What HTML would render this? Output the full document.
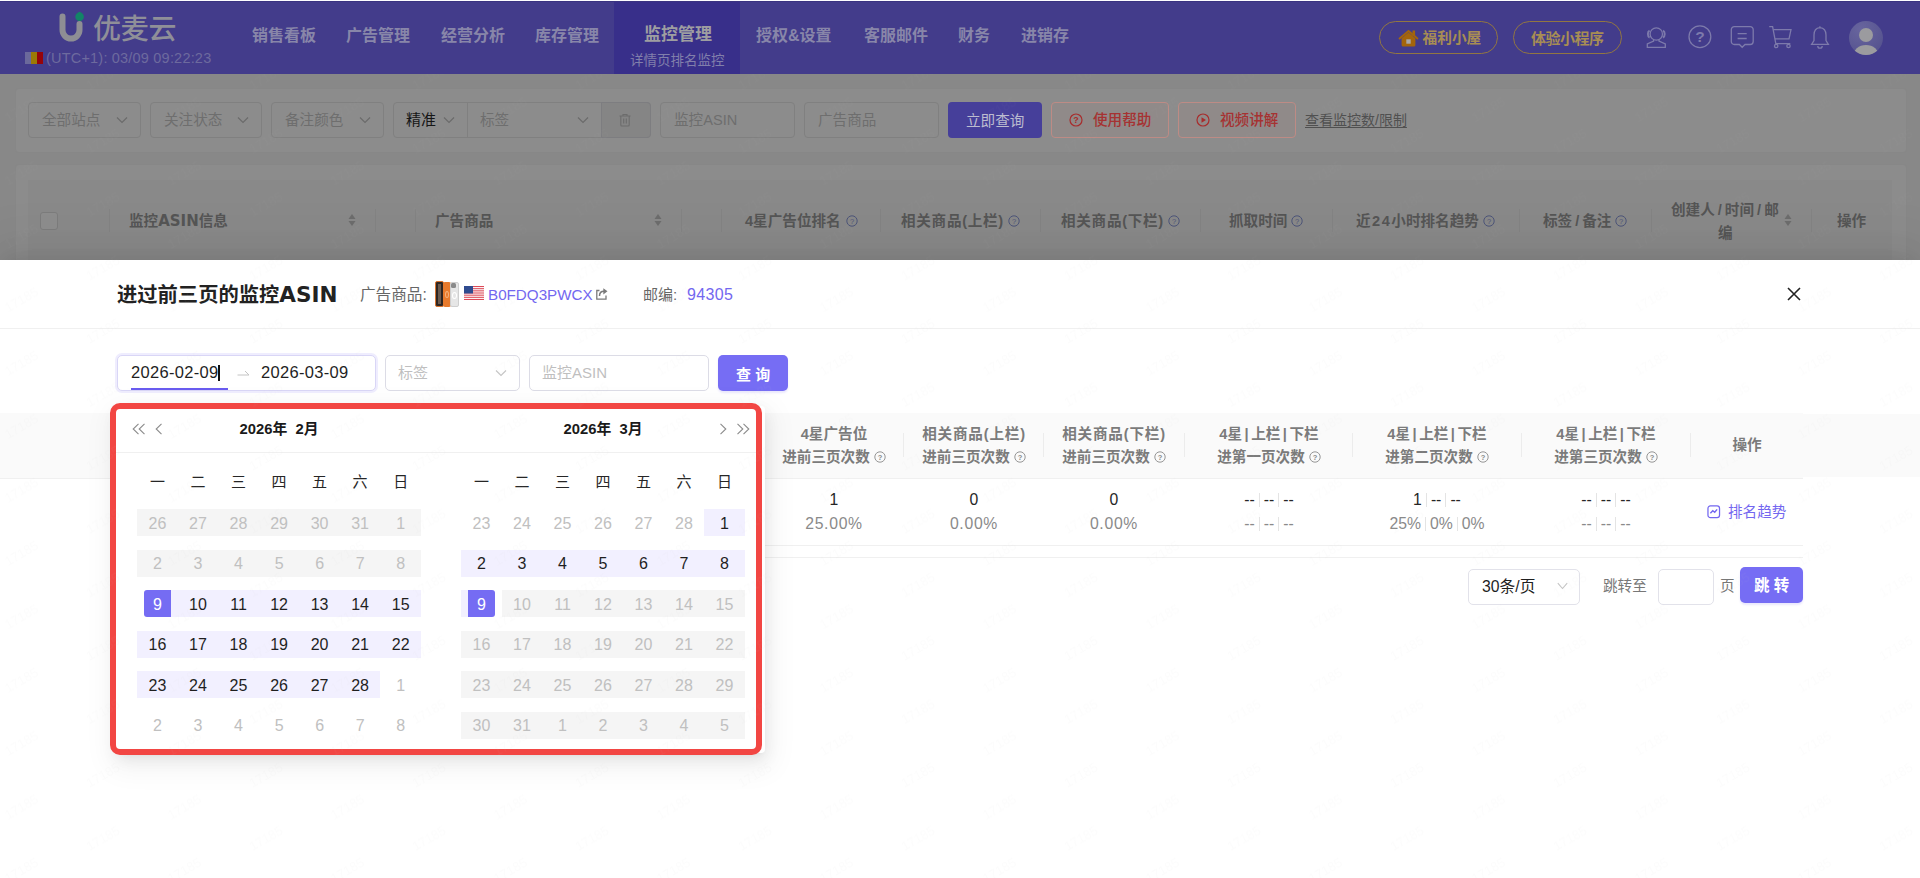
<!DOCTYPE html>
<html lang="zh-CN">
<head>
<meta charset="utf-8">
<title>优麦云 - 详情页排名监控</title>
<style>
*{box-sizing:border-box;margin:0;padding:0}
html,body{width:1920px;height:878px;overflow:hidden;background:#888888}
body{font-family:"Liberation Sans","Noto Sans CJK SC",sans-serif;font-size:14px;color:#333;position:relative}
.abs{position:absolute}
.pp{font-style:normal;margin:0 2.5px}
.sl{font-style:normal;margin:0 3px}
.t{position:absolute;white-space:nowrap;line-height:1}
/* ===== dimmed page ===== */
#hdr{position:absolute;left:0;top:0;width:1920px;height:74px;background:#433c8b}
#hdr .act{position:absolute;left:614px;top:0;width:126px;height:74px;background:#382f8a}
.nav{position:absolute;top:28px;font-size:16px;font-weight:bold;color:#8886a9;white-space:nowrap;line-height:16px}
.card{position:absolute;background:#8c8c8c;border-radius:4px}
.sel{position:absolute;top:102px;height:36px;border:1px solid #808080;border-radius:4px;background:#8c8c8c}
.sel span{position:absolute;left:13px;top:9px;font-size:14.6px;line-height:16px;color:#6e6e6e;white-space:nowrap}
.chev{position:absolute;width:12px;height:8px}
.th1{position:absolute;font-size:14.6px;font-weight:bold;color:#555;white-space:nowrap;line-height:16px}
/* ===== drawer ===== */
#drawer{position:absolute;left:0;top:260px;width:1920px;height:618px;background:#fff;box-shadow:0 -6px 16px -8px rgba(0,0,0,.08),0 -9px 28px rgba(0,0,0,.05),0 -12px 48px 16px rgba(0,0,0,.03)}
</style>
</head>
<body>
<div id="hdr">
<div class="abs" style="left:0;top:0;width:1920px;height:1px;background:#fdfdff;z-index:3"></div><div class="abs" style="left:0;top:1px;width:1920px;height:1px;background:#3a3381;z-index:3"></div>
<div class="act"></div>
<svg class="abs" style="left:56px;top:10px" width="32" height="36" viewBox="0 0 32 36">
<path d="M6.5 6.5 V20 a8.5 8.5 0 0 0 17 0 V14" fill="none" stroke="#8e8e94" stroke-width="6" stroke-linecap="round"/>
<circle cx="23.600" cy="6.700" r="4.300" fill="#138467"/><path d="M20.800 3.600 L23.600 1.700 L26.400 3.600 Z" fill="#138467"/>
</svg>
<div class="t" style="left:93px;top:15px;font-size:28px;line-height:30px;color:#8f8f98;font-weight:500;letter-spacing:-0.3px">优麦云</div>
<div class="abs" style="left:25px;top:52px;width:6px;height:12px;background:#6b699b"></div>
<div class="abs" style="left:31px;top:52px;width:6px;height:12px;background:#9b7a05"></div>
<div class="abs" style="left:37px;top:52px;width:6px;height:12px;background:#96040a"></div>
<div class="t" id="utc" style="left:46px;top:50px;font-size:14.5px;line-height:16px;color:#6d6a9e;letter-spacing:0.2px">(UTC+1): 03/09 09:22:23</div>
<div class="nav" style="left:252px">销售看板</div>
<div class="nav" style="left:346px">广告管理</div>
<div class="nav" style="left:441px">经营分析</div>
<div class="nav" style="left:535px">库存管理</div>
<div class="nav" style="left:644px;font-size:17px;color:#9e9ea1;top:27px">监控管理</div>
<div class="t" style="left:630px;top:53px;font-size:13.5px;line-height:15px;color:#817fab">详情页排名监控</div>
<div class="nav" style="left:756px">授权&amp;设置</div>
<div class="nav" style="left:864px">客服邮件</div>
<div class="nav" style="left:958px">财务</div>
<div class="nav" style="left:1021px">进销存</div>
<div class="abs" style="left:1379px;top:21px;width:119px;height:33px;border:1px solid #927641;border-radius:17px"></div>
<svg class="abs" style="left:1397.500px;top:28.500px" width="21" height="18" viewBox="0 0 21 18"><rect x="14.500" y="1.500" width="2.600" height="5.500" fill="#a4650b"/><path d="M10.500 0.800 L20.600 9.300 L19.400 10.700 L10.500 3.300 L1.600 10.700 L0.400 9.300 Z" fill="#a4650b"/><path d="M3.600 9.200 L10.500 3.400 L17.400 9.200 V16 a1.500 1.500 0 0 1 -1.500 1.500 H5.100 a1.500 1.500 0 0 1 -1.500 -1.500 Z" fill="#a4650b"/><rect x="8.300" y="10.300" width="4.400" height="4.400" fill="#aaa7a6"/></svg>
<div class="t" style="left:1422.500px;top:29.500px;font-size:14.700px;line-height:17px;font-weight:bold;color:#a78d54">福利小屋</div>
<div class="abs" style="left:1513px;top:21px;width:109px;height:33px;border:1px solid #927641;border-radius:17px"></div>
<div class="t" style="left:1531px;top:30px;font-size:15px;line-height:17px;font-weight:bold;color:#a78d54;letter-spacing:-0.5px">体验小程序</div>
<!-- icons -->
<svg class="abs" style="left:1645px;top:25px" width="24" height="24" viewBox="0 0 24 24" fill="none" stroke="#7d7aab" stroke-width="1.300"><circle cx="11.300" cy="9" r="6.200"/><path d="M4.600 5.600 C2.300 6.600 2.300 11.600 4.600 12.600 M18 5.600 C20.300 6.600 20.300 11.600 18 12.600" stroke-width="1.900"/><path d="M8.600 14.600 V16 L2.300 19 V22.300 H20.300 V19 L14 16 V14.600"/></svg>
<svg class="abs" style="left:1688px;top:25px" width="24" height="24" viewBox="0 0 24 24" fill="none" stroke="#7d7aab" stroke-width="1.300"><circle cx="11.900" cy="11.700" r="10.900"/><text x="11.900" y="17.300" font-size="15.500" font-weight="bold" text-anchor="middle" fill="#7d7aab" stroke="none" font-family="Liberation Sans,sans-serif">?</text></svg>
<svg class="abs" style="left:1730px;top:25px" width="24" height="24" viewBox="0 0 24 24" fill="none" stroke="#7d7aab" stroke-width="1.300"><path d="M4.300 1.700 H20.200 a3 3 0 0 1 3 3 V16.500 a3 3 0 0 1 -3 3 H15 L12.200 22.300 L9.400 19.500 H4.300 a3 3 0 0 1 -3 -3 V4.700 a3 3 0 0 1 3 -3 z"/><path d="M7.600 8.600 H16.700 M7.600 13.500 H16.700"/></svg>
<svg class="abs" style="left:1768px;top:25px" width="24" height="24" viewBox="0 0 24 24" fill="none" stroke="#7d7aab" stroke-width="1.300"><path d="M1.200 1.600 H4.600 L7.800 18.700 H22.300"/><path d="M5.300 4.700 H23 L21 13.800 H7" /><circle cx="8.200" cy="21" r="1.700"/><circle cx="20.500" cy="21" r="1.700"/></svg>
<svg class="abs" style="left:1809px;top:25px" width="24" height="24" viewBox="0 0 24 24" fill="none" stroke="#7d7aab" stroke-width="1.300"><path d="M10.900 2.600 C6.500 3 5 6.500 5 10 V15.500 L2.600 19.400 H19.400 L17 15.500 V10 C17 6.500 15.300 3 10.900 2.600 Z"/><path d="M8.800 21 a2.200 2.200 0 0 0 4.400 0 M10.900 1.200 v1.400"/></svg>
<div class="abs" style="left:1849px;top:21px;width:34px;height:34px;border-radius:50%;background:radial-gradient(circle at 35% 25%,#68659e,#575490 75%);overflow:hidden"><div class="abs" style="left:10px;top:7px;width:14px;height:14px;border-radius:50%;background:#9b9b9f"></div><div class="abs" style="left:4px;top:23.500px;width:26px;height:22px;border-radius:50%;background:#9b9b9f"></div></div>
</div>
<div class="card" style="left:15px;top:88px;width:1892px;height:65px;border:1px solid #878787"></div>
<div class="sel" style="left:28px;width:113px"><span>全部站点</span></div><svg class="abs" style="left:116px;top:116px" width="12" height="8" viewBox="0 0 12 8"><path d="M1 1.500 L6 6.500 L11 1.500" fill="none" stroke="#6a6a6a" stroke-width="1.100"/></svg>
<div class="sel" style="left:150px;width:112px"><span>关注状态</span></div><svg class="abs" style="left:237px;top:116px" width="12" height="8" viewBox="0 0 12 8"><path d="M1 1.500 L6 6.500 L11 1.500" fill="none" stroke="#6a6a6a" stroke-width="1.100"/></svg>
<div class="sel" style="left:271px;width:113px"><span>备注颜色</span></div><svg class="abs" style="left:359px;top:116px" width="12" height="8" viewBox="0 0 12 8"><path d="M1 1.500 L6 6.500 L11 1.500" fill="none" stroke="#6a6a6a" stroke-width="1.100"/></svg>
<div class="sel" style="left:393px;width:258px"><span style="color:#161616;font-size:15px;left:12px">精准</span>
<div class="abs" style="left:73px;top:0;width:1px;height:34px;background:#808080"></div>
<span style="left:86px">标签</span>
<div class="abs" style="left:207px;top:-1px;width:50px;height:36px;background:#858585;border:1px solid #7d7d80;border-radius:0 4px 4px 0"></div>
</div><svg class="abs" style="left:443px;top:116px" width="12" height="8" viewBox="0 0 12 8"><path d="M1 1.500 L6 6.500 L11 1.500" fill="none" stroke="#6a6a6a" stroke-width="1.100"/></svg><svg class="abs" style="left:577px;top:116px" width="12" height="8" viewBox="0 0 12 8"><path d="M1 1.500 L6 6.500 L11 1.500" fill="none" stroke="#6a6a6a" stroke-width="1.100"/></svg>
<svg class="abs" style="left:619px;top:113px" width="12" height="14" viewBox="0 0 12 14" fill="none" stroke="#6c6c6c" stroke-width="1.100"><path d="M0.500 3 h11 M4 3 v-1.500 h4 v1.500 M1.800 3 v9 a1 1 0 0 0 1 1 h6.400 a1 1 0 0 0 1 -1 v-9 M4.700 5.500 v5 M7.300 5.500 v5"/></svg>
<div class="sel" style="left:660px;width:135px"><span>监控ASIN</span></div>
<div class="sel" style="left:804px;width:135px"><span>广告商品</span></div>
<div class="abs" style="left:948px;top:102px;width:94px;height:36px;background:#463f9a;border-radius:4px"></div>
<div class="t" style="left:966px;top:113px;font-size:14.6px;line-height:17px;color:#bcbcd0">立即查询</div>
<div class="abs" style="left:1051px;top:102px;width:118px;height:36px;border:1px solid #bd8b85;border-radius:4px;background:#908a89"></div>
<svg class="abs" style="left:1069px;top:113px" width="14" height="14" viewBox="0 0 14 14"><circle cx="7" cy="7" r="6" fill="none" stroke="#a82c2c" stroke-width="1.200"/><text x="7" y="10.300" font-size="9" font-weight="bold" text-anchor="middle" fill="#a82c2c" font-family="Liberation Sans,sans-serif">?</text></svg>
<div class="t" style="left:1093px;top:112px;font-size:14.6px;line-height:17px;color:#a63232;font-weight:500">使用帮助</div>
<div class="abs" style="left:1178px;top:102px;width:118px;height:36px;border:1px solid #bd8b85;border-radius:4px;background:#908a89"></div>
<svg class="abs" style="left:1196px;top:113px" width="14" height="14" viewBox="0 0 14 14"><circle cx="7" cy="7" r="6" fill="none" stroke="#a82c2c" stroke-width="1.200"/><path d="M5.500 4.300 L10 7 L5.500 9.700 Z" fill="#a82c2c"/></svg>
<div class="t" style="left:1220px;top:112px;font-size:14.6px;line-height:17px;color:#a63232;font-weight:500">视频讲解</div>
<div class="t" style="left:1305px;top:112px;font-size:14px;line-height:16px;color:#505050;text-decoration:underline;text-underline-offset:2px">查看监控数/限制</div>

<div class="card" style="left:15px;top:164px;width:1892px;height:120px;border:1px solid #878787"></div>
<div class="abs" style="left:28px;top:180px;width:1864px;height:90px;background:#898989"></div>
<div class="abs" style="left:40px;top:212px;width:18px;height:18px;border:1px solid #7c7c7c;border-radius:3px;background:#8d8d8d"></div>
<div class="abs" style="left:109px;top:209px;width:1px;height:23px;background:#838383"></div><div class="abs" style="left:375px;top:209px;width:1px;height:23px;background:#838383"></div><div class="abs" style="left:415px;top:209px;width:1px;height:23px;background:#838383"></div><div class="abs" style="left:681px;top:209px;width:1px;height:23px;background:#838383"></div><div class="abs" style="left:721px;top:209px;width:1px;height:23px;background:#838383"></div><div class="abs" style="left:880px;top:209px;width:1px;height:23px;background:#838383"></div><div class="abs" style="left:1040px;top:209px;width:1px;height:23px;background:#838383"></div><div class="abs" style="left:1200px;top:209px;width:1px;height:23px;background:#838383"></div><div class="abs" style="left:1332px;top:209px;width:1px;height:23px;background:#838383"></div><div class="abs" style="left:1519px;top:209px;width:1px;height:23px;background:#838383"></div><div class="abs" style="left:1651px;top:209px;width:1px;height:23px;background:#838383"></div><div class="abs" style="left:1811px;top:209px;width:1px;height:23px;background:#838383"></div>
<div class="th1" style="left:129px;top:213px">监控<span style="font-family:'DejaVu Sans','Liberation Sans',sans-serif;font-size:15px">ASIN</span>信息</div><svg class="abs" style="left:348px;top:213px" width="8" height="14" viewBox="0 0 8 14"><path d="M4 1 L7.500 6 H0.500 Z M4 13 L7.500 8 H0.500 Z" fill="#6c6c6c"/></svg>
<div class="th1" style="left:435px;top:213px">广告商品</div><svg class="abs" style="left:654px;top:213px" width="8" height="14" viewBox="0 0 8 14"><path d="M4 1 L7.500 6 H0.500 Z M4 13 L7.500 8 H0.500 Z" fill="#6c6c6c"/></svg>
<div class="th1" style="left:745px;top:213px">4星广告位排名</div><svg class="abs" style="left:846px;top:215px" width="12" height="12" viewBox="0 0 12 12"><circle cx="6" cy="6" r="5.200" fill="none" stroke="#4c5479" stroke-width="1"/><text x="6" y="8.800" font-size="7.500" text-anchor="middle" fill="#4c5479" font-family="Liberation Sans,sans-serif">?</text></svg>
<div class="th1" style="left:901px;top:213px"><span style="letter-spacing:0.7px">相关商品(上栏)</span></div><svg class="abs" style="left:1008px;top:215px" width="12" height="12" viewBox="0 0 12 12"><circle cx="6" cy="6" r="5.200" fill="none" stroke="#4c5479" stroke-width="1"/><text x="6" y="8.800" font-size="7.500" text-anchor="middle" fill="#4c5479" font-family="Liberation Sans,sans-serif">?</text></svg>
<div class="th1" style="left:1061px;top:213px"><span style="letter-spacing:0.7px">相关商品(下栏)</span></div><svg class="abs" style="left:1168px;top:215px" width="12" height="12" viewBox="0 0 12 12"><circle cx="6" cy="6" r="5.200" fill="none" stroke="#4c5479" stroke-width="1"/><text x="6" y="8.800" font-size="7.500" text-anchor="middle" fill="#4c5479" font-family="Liberation Sans,sans-serif">?</text></svg>
<div class="th1" style="left:1229px;top:213px">抓取时间</div><svg class="abs" style="left:1291px;top:215px" width="12" height="12" viewBox="0 0 12 12"><circle cx="6" cy="6" r="5.200" fill="none" stroke="#4c5479" stroke-width="1"/><text x="6" y="8.800" font-size="7.500" text-anchor="middle" fill="#4c5479" font-family="Liberation Sans,sans-serif">?</text></svg>
<div class="th1" style="left:1356px;top:213px"><span style="letter-spacing:1.5px">近24</span>小时排名趋势</div><svg class="abs" style="left:1483px;top:215px" width="12" height="12" viewBox="0 0 12 12"><circle cx="6" cy="6" r="5.200" fill="none" stroke="#4c5479" stroke-width="1"/><text x="6" y="8.800" font-size="7.500" text-anchor="middle" fill="#4c5479" font-family="Liberation Sans,sans-serif">?</text></svg>
<div class="th1" style="left:1543px;top:213px">标签<i class="sl">/</i>备注</div><svg class="abs" style="left:1615px;top:215px" width="12" height="12" viewBox="0 0 12 12"><circle cx="6" cy="6" r="5.200" fill="none" stroke="#4c5479" stroke-width="1"/><text x="6" y="8.800" font-size="7.500" text-anchor="middle" fill="#4c5479" font-family="Liberation Sans,sans-serif">?</text></svg>
<div class="th1" style="left:1671px;top:202px">创建人<i class="sl">/</i>时间<i class="sl">/</i>邮</div>
<div class="th1" style="left:1718px;top:225px">编</div><svg class="abs" style="left:1784px;top:213px" width="8" height="14" viewBox="0 0 8 14"><path d="M4 1 L7.500 6 H0.500 Z M4 13 L7.500 8 H0.500 Z" fill="#6c6c6c"/></svg>
<div class="th1" style="left:1837px;top:213px">操作</div>

<div id="drawer">
<div class="t" style="left:117px;top:24px;font-size:20.3px;line-height:22px;color:#222;font-weight:bold">进过前三页的监控<span style="font-family:'DejaVu Sans','Liberation Sans',sans-serif;font-size:21.5px">ASIN</span></div>
<div class="t" style="left:360px;top:26px;font-size:15.6px;line-height:17px;color:#666;">广告商品:</div>
<div class="abs" style="left:435px;top:20px;width:24px;height:28px;overflow:hidden;background:#fff"><div class="abs" style="left:0;top:1px;width:9px;height:26px;background:#2e2622;border:1.500px solid #d9742f;border-radius:2px"></div><div class="abs" style="left:3px;top:4px;width:3px;height:20px;background:#6b5a4e"></div><div class="abs" style="left:8px;top:2px;width:8px;height:25px;background:#e87a2c;border-radius:2px"></div><div class="abs" style="left:10px;top:11px;width:4px;height:7px;border:1px solid #f3b27d;border-radius:50%"></div><div class="abs" style="left:15px;top:2px;width:9px;height:25px;background:#e6e6e6;border:1px solid #cfcfcf;border-radius:2px"></div><div class="abs" style="left:16px;top:3px;width:5px;height:5px;background:#8a8a8a;border-radius:1.500px"></div><div class="abs" style="left:17px;top:12px;width:5px;height:7px;border:1px solid #fff;border-radius:50%"></div></div>
<svg class="abs" style="left:464px;top:26px" width="20" height="14" viewBox="0 0 20 14"><rect width="20" height="14" fill="#fff"/><rect x="0" y="0.00" width="20" height="1.08" fill="#dc4a58"/><rect x="0" y="2.15" width="20" height="1.08" fill="#dc4a58"/><rect x="0" y="4.31" width="20" height="1.08" fill="#dc4a58"/><rect x="0" y="6.46" width="20" height="1.08" fill="#dc4a58"/><rect x="0" y="8.62" width="20" height="1.08" fill="#dc4a58"/><rect x="0" y="10.77" width="20" height="1.08" fill="#dc4a58"/><rect x="0" y="12.92" width="20" height="1.08" fill="#dc4a58"/><rect width="9" height="7.500" fill="#2f4b8f"/></svg>
<div class="t" style="left:488px;top:26px;font-size:15.2px;line-height:17px;color:#7367f0;">B0FDQ3PWCX</div>
<svg class="abs" style="left:595px;top:27px" width="14" height="14" viewBox="0 0 14 14" fill="none" stroke="#7a7a7a" stroke-width="1.300"><path d="M4.500 3.500 H1.800 V12.200 H11 V8.500"/><path d="M4.500 9 C4.500 5.800 6.500 4.300 9 4.300" stroke-width="1.500"/><path d="M8.300 1.200 L12.500 4.300 L8.300 7.400 Z" fill="#7a7a7a" stroke="none"/></svg>
<div class="t" style="left:643px;top:26px;font-size:15px;line-height:17px;color:#666;">邮编:</div>
<div class="t" style="left:687px;top:26px;font-size:16px;letter-spacing:0.35px;line-height:18px;color:#7367f0;">94305</div>
<svg class="abs" style="left:1787px;top:27px" width="14" height="14" viewBox="0 0 14 14"><path d="M1 1 L13 13 M13 1 L1 13" stroke="#222" stroke-width="1.600"/></svg>
<div class="abs" style="left:0px;top:68px;width:1920px;height:1px;background:#f0f0f0;"></div>
<div class="abs" style="left:117px;top:95px;width:259px;height:36px;background:#fff;border:1px solid #d9d6f6;border-radius:5px;box-shadow:0 0 0 2px #efedfe"></div>
<div class="t" style="left:131px;top:103px;font-size:16.5px;line-height:18px;color:#1f1f1f;letter-spacing:0.3px">2026-02-09</div>
<div class="abs" style="left:218px;top:105px;width:2px;height:16px;background:#111;"></div>
<svg class="abs" style="left:237px;top:109px" width="13" height="8" viewBox="0 0 13 8"><path d="M0.500 6 H12 L8 2" fill="none" stroke="#c4c4c4" stroke-width="1"/></svg>
<div class="t" style="left:261px;top:103px;font-size:16.5px;line-height:18px;color:#1f1f1f;letter-spacing:0.3px">2026-03-09</div>
<div class="abs" style="left:131px;top:128px;width:97px;height:2px;background:#6a5cf0;"></div>
<div class="abs" style="left:385px;top:95px;width:135px;height:36px;background:#fff;border:1px solid #dcdce6;border-radius:5px"></div>
<div class="t" style="left:398px;top:104px;font-size:15px;line-height:17px;color:#bfbfbf;">标签</div>
<svg class="abs" style="left:495px;top:109px" width="12" height="8" viewBox="0 0 12 8"><path d="M1 1.500 L6 6.500 L11 1.500" fill="none" stroke="#c4c4c4" stroke-width="1.100"/></svg>
<div class="abs" style="left:529px;top:95px;width:180px;height:36px;background:#fff;border:1px solid #dcdce6;border-radius:5px"></div>
<div class="t" style="left:542px;top:104px;font-size:15px;line-height:17px;color:#bfbfbf;">监控ASIN</div>
<div class="abs" style="left:718px;top:95px;width:70px;height:36px;background:#766df4;border-radius:5px;box-shadow:0 2px 2px rgba(115,103,240,.15)"></div>
<div class="t" style="left:736px;top:105.500px;font-size:15px;line-height:17px;color:#fff;font-weight:bold">查 询</div>
<div class="abs" style="left:0px;top:153px;width:1803px;height:65px;background:#fafafa;"></div><div class="abs" style="left:1803px;top:154px;width:117px;height:63px;background:#fafafa;"></div>
<div class="abs" style="left:0px;top:218px;width:1803px;height:1px;background:#f0f0f0;"></div>
<div class="abs" style="left:903px;top:173px;width:1px;height:24px;background:#ececec;"></div>
<div class="abs" style="left:1043px;top:173px;width:1px;height:24px;background:#ececec;"></div>
<div class="abs" style="left:1184px;top:173px;width:1px;height:24px;background:#ececec;"></div>
<div class="abs" style="left:1352px;top:173px;width:1px;height:24px;background:#ececec;"></div>
<div class="abs" style="left:1521px;top:173px;width:1px;height:24px;background:#ececec;"></div>
<div class="abs" style="left:1690px;top:173px;width:1px;height:24px;background:#ececec;"></div>
<div class="t" style="left:684px;width:300px;text-align:center;top:166px;font-size:14.6px;line-height:17px;color:#7b7b7b;font-weight:bold">4星广告位</div>
<div class="t" style="left:684px;width:300px;text-align:center;top:189px;font-size:14.6px;line-height:17px;color:#7b7b7b;font-weight:bold">进前三页次数<svg style="display:inline-block;vertical-align:-1px;margin-left:4px" width="12" height="12" viewBox="0 0 12 12"><circle cx="6" cy="6" r="5.200" fill="none" stroke="#8a8a8a" stroke-width="0.900"/><text x="6" y="8.800" font-size="7.500" text-anchor="middle" fill="#8a8a8a" font-family="Liberation Sans,sans-serif">?</text></svg></div>
<div class="t" style="left:824px;width:300px;text-align:center;top:166px;font-size:14.6px;line-height:17px;color:#7b7b7b;font-weight:bold"><span style="letter-spacing:0.8px">相关商品(上栏)</span></div>
<div class="t" style="left:824px;width:300px;text-align:center;top:189px;font-size:14.6px;line-height:17px;color:#7b7b7b;font-weight:bold">进前三页次数<svg style="display:inline-block;vertical-align:-1px;margin-left:4px" width="12" height="12" viewBox="0 0 12 12"><circle cx="6" cy="6" r="5.200" fill="none" stroke="#8a8a8a" stroke-width="0.900"/><text x="6" y="8.800" font-size="7.500" text-anchor="middle" fill="#8a8a8a" font-family="Liberation Sans,sans-serif">?</text></svg></div>
<div class="t" style="left:964px;width:300px;text-align:center;top:166px;font-size:14.6px;line-height:17px;color:#7b7b7b;font-weight:bold"><span style="letter-spacing:0.8px">相关商品(下栏)</span></div>
<div class="t" style="left:964px;width:300px;text-align:center;top:189px;font-size:14.6px;line-height:17px;color:#7b7b7b;font-weight:bold">进前三页次数<svg style="display:inline-block;vertical-align:-1px;margin-left:4px" width="12" height="12" viewBox="0 0 12 12"><circle cx="6" cy="6" r="5.200" fill="none" stroke="#8a8a8a" stroke-width="0.900"/><text x="6" y="8.800" font-size="7.500" text-anchor="middle" fill="#8a8a8a" font-family="Liberation Sans,sans-serif">?</text></svg></div>
<div class="t" style="left:1119px;width:300px;text-align:center;top:166px;font-size:14.6px;line-height:17px;color:#7b7b7b;font-weight:bold">4星<i class="pp">|</i>上栏<i class="pp">|</i>下栏</div>
<div class="t" style="left:1119px;width:300px;text-align:center;top:189px;font-size:14.6px;line-height:17px;color:#7b7b7b;font-weight:bold">进第一页次数<svg style="display:inline-block;vertical-align:-1px;margin-left:4px" width="12" height="12" viewBox="0 0 12 12"><circle cx="6" cy="6" r="5.200" fill="none" stroke="#8a8a8a" stroke-width="0.900"/><text x="6" y="8.800" font-size="7.500" text-anchor="middle" fill="#8a8a8a" font-family="Liberation Sans,sans-serif">?</text></svg></div>
<div class="t" style="left:1287px;width:300px;text-align:center;top:166px;font-size:14.6px;line-height:17px;color:#7b7b7b;font-weight:bold">4星<i class="pp">|</i>上栏<i class="pp">|</i>下栏</div>
<div class="t" style="left:1287px;width:300px;text-align:center;top:189px;font-size:14.6px;line-height:17px;color:#7b7b7b;font-weight:bold">进第二页次数<svg style="display:inline-block;vertical-align:-1px;margin-left:4px" width="12" height="12" viewBox="0 0 12 12"><circle cx="6" cy="6" r="5.200" fill="none" stroke="#8a8a8a" stroke-width="0.900"/><text x="6" y="8.800" font-size="7.500" text-anchor="middle" fill="#8a8a8a" font-family="Liberation Sans,sans-serif">?</text></svg></div>
<div class="t" style="left:1456px;width:300px;text-align:center;top:166px;font-size:14.6px;line-height:17px;color:#7b7b7b;font-weight:bold">4星<i class="pp">|</i>上栏<i class="pp">|</i>下栏</div>
<div class="t" style="left:1456px;width:300px;text-align:center;top:189px;font-size:14.6px;line-height:17px;color:#7b7b7b;font-weight:bold">进第三页次数<svg style="display:inline-block;vertical-align:-1px;margin-left:4px" width="12" height="12" viewBox="0 0 12 12"><circle cx="6" cy="6" r="5.200" fill="none" stroke="#8a8a8a" stroke-width="0.900"/><text x="6" y="8.800" font-size="7.500" text-anchor="middle" fill="#8a8a8a" font-family="Liberation Sans,sans-serif">?</text></svg></div>
<div class="t" style="left:1597px;width:300px;text-align:center;top:177px;font-size:14.6px;line-height:17px;color:#7b7b7b;font-weight:bold">操作</div>
<div class="t" style="left:684px;width:300px;text-align:center;top:231px;font-size:15.75px;line-height:18px;color:#262626;">1</div>
<div class="t" style="left:684px;width:300px;text-align:center;top:255px;font-size:15.75px;line-height:18px;color:#8a8a8a;"><span style="letter-spacing:0.7px">25.00%</span></div>
<div class="t" style="left:824px;width:300px;text-align:center;top:231px;font-size:15.75px;line-height:18px;color:#262626;">0</div>
<div class="t" style="left:824px;width:300px;text-align:center;top:255px;font-size:15.75px;line-height:18px;color:#8a8a8a;"><span style="letter-spacing:0.7px">0.00%</span></div>
<div class="t" style="left:964px;width:300px;text-align:center;top:231px;font-size:15.75px;line-height:18px;color:#262626;">0</div>
<div class="t" style="left:964px;width:300px;text-align:center;top:255px;font-size:15.75px;line-height:18px;color:#8a8a8a;"><span style="letter-spacing:0.7px">0.00%</span></div>
<div class="t" style="left:1119px;width:300px;text-align:center;top:231px;font-size:15.75px;line-height:18px;color:#262626;">--<span style="display:inline-block;width:1px;height:14px;background:#e4e4e4;vertical-align:-2px;margin:0 4px"></span>--<span style="display:inline-block;width:1px;height:14px;background:#e4e4e4;vertical-align:-2px;margin:0 4px"></span>--</div>
<div class="t" style="left:1119px;width:300px;text-align:center;top:255px;font-size:15.75px;line-height:18px;color:#8a8a8a;">--<span style="display:inline-block;width:1px;height:14px;background:#e4e4e4;vertical-align:-2px;margin:0 4px"></span>--<span style="display:inline-block;width:1px;height:14px;background:#e4e4e4;vertical-align:-2px;margin:0 4px"></span>--</div>
<div class="t" style="left:1287px;width:300px;text-align:center;top:231px;font-size:15.75px;line-height:18px;color:#262626;">1<span style="display:inline-block;width:1px;height:14px;background:#e4e4e4;vertical-align:-2px;margin:0 4px"></span>--<span style="display:inline-block;width:1px;height:14px;background:#e4e4e4;vertical-align:-2px;margin:0 4px"></span>--</div>
<div class="t" style="left:1287px;width:300px;text-align:center;top:255px;font-size:15.75px;line-height:18px;color:#8a8a8a;">25%<span style="display:inline-block;width:1px;height:14px;background:#e4e4e4;vertical-align:-2px;margin:0 4px"></span>0%<span style="display:inline-block;width:1px;height:14px;background:#e4e4e4;vertical-align:-2px;margin:0 4px"></span>0%</div>
<div class="t" style="left:1456px;width:300px;text-align:center;top:231px;font-size:15.75px;line-height:18px;color:#262626;">--<span style="display:inline-block;width:1px;height:14px;background:#e4e4e4;vertical-align:-2px;margin:0 4px"></span>--<span style="display:inline-block;width:1px;height:14px;background:#e4e4e4;vertical-align:-2px;margin:0 4px"></span>--</div>
<div class="t" style="left:1456px;width:300px;text-align:center;top:255px;font-size:15.75px;line-height:18px;color:#8a8a8a;">--<span style="display:inline-block;width:1px;height:14px;background:#e4e4e4;vertical-align:-2px;margin:0 4px"></span>--<span style="display:inline-block;width:1px;height:14px;background:#e4e4e4;vertical-align:-2px;margin:0 4px"></span>--</div>
<svg class="abs" style="left:1707px;top:245px" width="13.500" height="13.500" viewBox="0 0 14 14" fill="none" stroke="#7367f0" stroke-width="1.300"><rect x="1" y="1" width="12" height="12" rx="2.500"/><path d="M3.500 8.500 L6 6 L8 7.500 L10.500 4.500" stroke-width="1.500"/></svg>
<div class="t" style="left:1728px;top:244px;font-size:14.6px;line-height:17px;color:#7367f0;">排名趋势</div>
<div class="abs" style="left:117px;top:285px;width:1686px;height:1px;background:#f0f0f0;"></div>
<div class="abs" style="left:117px;top:297px;width:1686px;height:1px;background:#f0f0f0;"></div>
<div class="abs" style="left:1468px;top:309px;width:112px;height:36px;background:#fff;border:1px solid #e2e2ea;border-radius:5px"></div>
<div class="t" style="left:1482px;top:318px;font-size:15.75px;line-height:18px;color:#1f1f1f;">30条/页</div>
<svg class="abs" style="left:1557px;top:322px" width="11" height="8" viewBox="0 0 11 8"><path d="M0.800 1.200 L5.500 6.500 L10.200 1.200" fill="none" stroke="#c4c4c4" stroke-width="1.100"/></svg>
<div class="t" style="left:1603px;top:318px;font-size:14.6px;line-height:17px;color:#777;">跳转至</div>
<div class="abs" style="left:1658px;top:309px;width:56px;height:36px;background:#fff;border:1px solid #e2e2ea;border-radius:5px"></div>
<div class="t" style="left:1720px;top:318px;font-size:14.6px;line-height:17px;color:#777;">页</div>
<div class="abs" style="left:1740px;top:307px;width:63px;height:36px;background:#766df4;border-radius:5px;box-shadow:0 2px 2px rgba(115,103,240,.15)"></div>
<div class="t" style="left:1754px;top:317px;font-size:15.5px;line-height:18px;color:#fff;font-weight:bold">跳 转</div>
<div class="abs" style="left:117px;top:146px;width:648px;height:347px;background:#fff;border-radius:4px;box-shadow:0 3px 6px -4px rgba(0,0,0,.12),0 6px 16px rgba(0,0,0,.08),0 9px 28px 8px rgba(0,0,0,.05)"></div>
<div class="abs" style="left:110px;top:143px;width:652px;height:352px;background:#fff;border:6px solid #f24643;border-radius:10px"></div>
<div class="t" style="left:179px;width:200px;text-align:center;top:159px;font-size:14.8px;line-height:20px;color:#1a1a1a;font-weight:bold">2026年&nbsp; 2月</div>
<div class="t" style="left:503px;width:200px;text-align:center;top:159px;font-size:14.8px;line-height:20px;color:#1a1a1a;font-weight:bold">2026年&nbsp; 3月</div>
<svg class="abs" style="left:132px;top:163px" width="8" height="12" viewBox="0 0 8 12"><path d="M6.500 0.800 L1.200 6 L6.500 11.200" fill="none" stroke="#8c8c8c" stroke-width="1.100"/></svg>
<svg class="abs" style="left:138px;top:163px" width="8" height="12" viewBox="0 0 8 12"><path d="M6.500 0.800 L1.200 6 L6.500 11.200" fill="none" stroke="#8c8c8c" stroke-width="1.100"/></svg>
<svg class="abs" style="left:155px;top:163px" width="8" height="12" viewBox="0 0 8 12"><path d="M6.500 0.800 L1.200 6 L6.500 11.200" fill="none" stroke="#8c8c8c" stroke-width="1.100"/></svg>
<svg class="abs" style="left:719px;top:163px" width="8" height="12" viewBox="0 0 8 12"><path d="M1.500 0.800 L6.800 6 L1.500 11.200" fill="none" stroke="#8c8c8c" stroke-width="1.100"/></svg>
<svg class="abs" style="left:736px;top:163px" width="8" height="12" viewBox="0 0 8 12"><path d="M1.500 0.800 L6.800 6 L1.500 11.200" fill="none" stroke="#8c8c8c" stroke-width="1.100"/></svg>
<svg class="abs" style="left:742px;top:163px" width="8" height="12" viewBox="0 0 8 12"><path d="M1.500 0.800 L6.800 6 L1.500 11.200" fill="none" stroke="#8c8c8c" stroke-width="1.100"/></svg>
<div class="abs" style="left:116px;top:192px;width:640px;height:1px;background:#f0f0f0;"></div>
<div class="t" style="left:127.4px;width:60px;text-align:center;top:212.0px;font-size:15px;line-height:20px;color:#262626;">一</div>
<div class="t" style="left:167.9px;width:60px;text-align:center;top:212.0px;font-size:15px;line-height:20px;color:#262626;">二</div>
<div class="t" style="left:208.5px;width:60px;text-align:center;top:212.0px;font-size:15px;line-height:20px;color:#262626;">三</div>
<div class="t" style="left:249.1px;width:60px;text-align:center;top:212.0px;font-size:15px;line-height:20px;color:#262626;">四</div>
<div class="t" style="left:289.6px;width:60px;text-align:center;top:212.0px;font-size:15px;line-height:20px;color:#262626;">五</div>
<div class="t" style="left:330.1px;width:60px;text-align:center;top:212.0px;font-size:15px;line-height:20px;color:#262626;">六</div>
<div class="t" style="left:370.7px;width:60px;text-align:center;top:212.0px;font-size:15px;line-height:20px;color:#262626;">日</div>
<div class="t" style="left:451.5px;width:60px;text-align:center;top:212.0px;font-size:15px;line-height:20px;color:#262626;">一</div>
<div class="t" style="left:492.0px;width:60px;text-align:center;top:212.0px;font-size:15px;line-height:20px;color:#262626;">二</div>
<div class="t" style="left:532.5px;width:60px;text-align:center;top:212.0px;font-size:15px;line-height:20px;color:#262626;">三</div>
<div class="t" style="left:573.0px;width:60px;text-align:center;top:212.0px;font-size:15px;line-height:20px;color:#262626;">四</div>
<div class="t" style="left:613.5px;width:60px;text-align:center;top:212.0px;font-size:15px;line-height:20px;color:#262626;">五</div>
<div class="t" style="left:654.0px;width:60px;text-align:center;top:212.0px;font-size:15px;line-height:20px;color:#262626;">六</div>
<div class="t" style="left:694.5px;width:60px;text-align:center;top:212.0px;font-size:15px;line-height:20px;color:#262626;">日</div>
<div class="abs" style="left:137.2px;top:249.2px;width:283.5px;height:27px;background:#f5f5f5;"></div>
<div class="abs" style="left:137.2px;top:289.7px;width:283.5px;height:27px;background:#f5f5f5;"></div>
<div class="abs" style="left:157.2px;top:330.2px;width:263.5px;height:27px;background:#f2f0ff;"></div>
<div class="abs" style="left:137.2px;top:370.7px;width:283.5px;height:27px;background:#f2f0ff;"></div>
<div class="abs" style="left:137.2px;top:411.2px;width:243.0px;height:27px;background:#f2f0ff;"></div>
<div class="abs" style="left:704.2px;top:249.2px;width:40.5px;height:27px;background:#f2f0ff;"></div>
<div class="abs" style="left:461.2px;top:289.7px;width:283.5px;height:27px;background:#f2f0ff;"></div>
<div class="abs" style="left:461px;top:330.2px;width:20px;height:27px;background:#f2f0ff;"></div>
<div class="abs" style="left:501.8px;top:330.2px;width:243.0px;height:27px;background:#f5f5f5;"></div>
<div class="abs" style="left:461.2px;top:370.7px;width:283.5px;height:27px;background:#f5f5f5;"></div>
<div class="abs" style="left:461.2px;top:411.2px;width:283.5px;height:27px;background:#f5f5f5;"></div>
<div class="abs" style="left:461.2px;top:451.7px;width:283.5px;height:27px;background:#f5f5f5;"></div>
<div class="abs" style="left:144px;top:330.2px;width:27px;height:27px;background:#756cf3;border-radius:3px 0 0 3px"></div>
<div class="abs" style="left:468px;top:330.2px;width:27px;height:27px;background:#756cf3;border-radius:0 3px 3px 0"></div>
<div class="t" style="left:127.4px;width:60px;text-align:center;top:253.9px;font-size:16px;line-height:20px;color:#c0c0c0;">26</div>
<div class="t" style="left:167.9px;width:60px;text-align:center;top:253.9px;font-size:16px;line-height:20px;color:#c0c0c0;">27</div>
<div class="t" style="left:208.5px;width:60px;text-align:center;top:253.9px;font-size:16px;line-height:20px;color:#c0c0c0;">28</div>
<div class="t" style="left:249.1px;width:60px;text-align:center;top:253.9px;font-size:16px;line-height:20px;color:#c0c0c0;">29</div>
<div class="t" style="left:289.6px;width:60px;text-align:center;top:253.9px;font-size:16px;line-height:20px;color:#c0c0c0;">30</div>
<div class="t" style="left:330.1px;width:60px;text-align:center;top:253.9px;font-size:16px;line-height:20px;color:#c0c0c0;">31</div>
<div class="t" style="left:370.7px;width:60px;text-align:center;top:253.9px;font-size:16px;line-height:20px;color:#c0c0c0;">1</div>
<div class="t" style="left:127.4px;width:60px;text-align:center;top:294.4px;font-size:16px;line-height:20px;color:#c0c0c0;">2</div>
<div class="t" style="left:167.9px;width:60px;text-align:center;top:294.4px;font-size:16px;line-height:20px;color:#c0c0c0;">3</div>
<div class="t" style="left:208.5px;width:60px;text-align:center;top:294.4px;font-size:16px;line-height:20px;color:#c0c0c0;">4</div>
<div class="t" style="left:249.1px;width:60px;text-align:center;top:294.4px;font-size:16px;line-height:20px;color:#c0c0c0;">5</div>
<div class="t" style="left:289.6px;width:60px;text-align:center;top:294.4px;font-size:16px;line-height:20px;color:#c0c0c0;">6</div>
<div class="t" style="left:330.1px;width:60px;text-align:center;top:294.4px;font-size:16px;line-height:20px;color:#c0c0c0;">7</div>
<div class="t" style="left:370.7px;width:60px;text-align:center;top:294.4px;font-size:16px;line-height:20px;color:#c0c0c0;">8</div>
<div class="t" style="left:127.4px;width:60px;text-align:center;top:334.9px;font-size:16px;line-height:20px;color:#fff;">9</div>
<div class="t" style="left:167.9px;width:60px;text-align:center;top:334.9px;font-size:16px;line-height:20px;color:#1f1f1f;">10</div>
<div class="t" style="left:208.5px;width:60px;text-align:center;top:334.9px;font-size:16px;line-height:20px;color:#1f1f1f;">11</div>
<div class="t" style="left:249.1px;width:60px;text-align:center;top:334.9px;font-size:16px;line-height:20px;color:#1f1f1f;">12</div>
<div class="t" style="left:289.6px;width:60px;text-align:center;top:334.9px;font-size:16px;line-height:20px;color:#1f1f1f;">13</div>
<div class="t" style="left:330.1px;width:60px;text-align:center;top:334.9px;font-size:16px;line-height:20px;color:#1f1f1f;">14</div>
<div class="t" style="left:370.7px;width:60px;text-align:center;top:334.9px;font-size:16px;line-height:20px;color:#1f1f1f;">15</div>
<div class="t" style="left:127.4px;width:60px;text-align:center;top:375.4px;font-size:16px;line-height:20px;color:#1f1f1f;">16</div>
<div class="t" style="left:167.9px;width:60px;text-align:center;top:375.4px;font-size:16px;line-height:20px;color:#1f1f1f;">17</div>
<div class="t" style="left:208.5px;width:60px;text-align:center;top:375.4px;font-size:16px;line-height:20px;color:#1f1f1f;">18</div>
<div class="t" style="left:249.1px;width:60px;text-align:center;top:375.4px;font-size:16px;line-height:20px;color:#1f1f1f;">19</div>
<div class="t" style="left:289.6px;width:60px;text-align:center;top:375.4px;font-size:16px;line-height:20px;color:#1f1f1f;">20</div>
<div class="t" style="left:330.1px;width:60px;text-align:center;top:375.4px;font-size:16px;line-height:20px;color:#1f1f1f;">21</div>
<div class="t" style="left:370.7px;width:60px;text-align:center;top:375.4px;font-size:16px;line-height:20px;color:#1f1f1f;">22</div>
<div class="t" style="left:127.4px;width:60px;text-align:center;top:415.9px;font-size:16px;line-height:20px;color:#1f1f1f;">23</div>
<div class="t" style="left:167.9px;width:60px;text-align:center;top:415.9px;font-size:16px;line-height:20px;color:#1f1f1f;">24</div>
<div class="t" style="left:208.5px;width:60px;text-align:center;top:415.9px;font-size:16px;line-height:20px;color:#1f1f1f;">25</div>
<div class="t" style="left:249.1px;width:60px;text-align:center;top:415.9px;font-size:16px;line-height:20px;color:#1f1f1f;">26</div>
<div class="t" style="left:289.6px;width:60px;text-align:center;top:415.9px;font-size:16px;line-height:20px;color:#1f1f1f;">27</div>
<div class="t" style="left:330.1px;width:60px;text-align:center;top:415.9px;font-size:16px;line-height:20px;color:#1f1f1f;">28</div>
<div class="t" style="left:370.7px;width:60px;text-align:center;top:415.9px;font-size:16px;line-height:20px;color:#c0c0c0;">1</div>
<div class="t" style="left:127.4px;width:60px;text-align:center;top:456.4px;font-size:16px;line-height:20px;color:#c0c0c0;">2</div>
<div class="t" style="left:167.9px;width:60px;text-align:center;top:456.4px;font-size:16px;line-height:20px;color:#c0c0c0;">3</div>
<div class="t" style="left:208.5px;width:60px;text-align:center;top:456.4px;font-size:16px;line-height:20px;color:#c0c0c0;">4</div>
<div class="t" style="left:249.1px;width:60px;text-align:center;top:456.4px;font-size:16px;line-height:20px;color:#c0c0c0;">5</div>
<div class="t" style="left:289.6px;width:60px;text-align:center;top:456.4px;font-size:16px;line-height:20px;color:#c0c0c0;">6</div>
<div class="t" style="left:330.1px;width:60px;text-align:center;top:456.4px;font-size:16px;line-height:20px;color:#c0c0c0;">7</div>
<div class="t" style="left:370.7px;width:60px;text-align:center;top:456.4px;font-size:16px;line-height:20px;color:#c0c0c0;">8</div>
<div class="t" style="left:451.5px;width:60px;text-align:center;top:253.9px;font-size:16px;line-height:20px;color:#c0c0c0;">23</div>
<div class="t" style="left:492.0px;width:60px;text-align:center;top:253.9px;font-size:16px;line-height:20px;color:#c0c0c0;">24</div>
<div class="t" style="left:532.5px;width:60px;text-align:center;top:253.9px;font-size:16px;line-height:20px;color:#c0c0c0;">25</div>
<div class="t" style="left:573.0px;width:60px;text-align:center;top:253.9px;font-size:16px;line-height:20px;color:#c0c0c0;">26</div>
<div class="t" style="left:613.5px;width:60px;text-align:center;top:253.9px;font-size:16px;line-height:20px;color:#c0c0c0;">27</div>
<div class="t" style="left:654.0px;width:60px;text-align:center;top:253.9px;font-size:16px;line-height:20px;color:#c0c0c0;">28</div>
<div class="t" style="left:694.5px;width:60px;text-align:center;top:253.9px;font-size:16px;line-height:20px;color:#1f1f1f;">1</div>
<div class="t" style="left:451.5px;width:60px;text-align:center;top:294.4px;font-size:16px;line-height:20px;color:#1f1f1f;">2</div>
<div class="t" style="left:492.0px;width:60px;text-align:center;top:294.4px;font-size:16px;line-height:20px;color:#1f1f1f;">3</div>
<div class="t" style="left:532.5px;width:60px;text-align:center;top:294.4px;font-size:16px;line-height:20px;color:#1f1f1f;">4</div>
<div class="t" style="left:573.0px;width:60px;text-align:center;top:294.4px;font-size:16px;line-height:20px;color:#1f1f1f;">5</div>
<div class="t" style="left:613.5px;width:60px;text-align:center;top:294.4px;font-size:16px;line-height:20px;color:#1f1f1f;">6</div>
<div class="t" style="left:654.0px;width:60px;text-align:center;top:294.4px;font-size:16px;line-height:20px;color:#1f1f1f;">7</div>
<div class="t" style="left:694.5px;width:60px;text-align:center;top:294.4px;font-size:16px;line-height:20px;color:#1f1f1f;">8</div>
<div class="t" style="left:451.5px;width:60px;text-align:center;top:334.9px;font-size:16px;line-height:20px;color:#fff;">9</div>
<div class="t" style="left:492.0px;width:60px;text-align:center;top:334.9px;font-size:16px;line-height:20px;color:#c0c0c0;">10</div>
<div class="t" style="left:532.5px;width:60px;text-align:center;top:334.9px;font-size:16px;line-height:20px;color:#c0c0c0;">11</div>
<div class="t" style="left:573.0px;width:60px;text-align:center;top:334.9px;font-size:16px;line-height:20px;color:#c0c0c0;">12</div>
<div class="t" style="left:613.5px;width:60px;text-align:center;top:334.9px;font-size:16px;line-height:20px;color:#c0c0c0;">13</div>
<div class="t" style="left:654.0px;width:60px;text-align:center;top:334.9px;font-size:16px;line-height:20px;color:#c0c0c0;">14</div>
<div class="t" style="left:694.5px;width:60px;text-align:center;top:334.9px;font-size:16px;line-height:20px;color:#c0c0c0;">15</div>
<div class="t" style="left:451.5px;width:60px;text-align:center;top:375.4px;font-size:16px;line-height:20px;color:#c0c0c0;">16</div>
<div class="t" style="left:492.0px;width:60px;text-align:center;top:375.4px;font-size:16px;line-height:20px;color:#c0c0c0;">17</div>
<div class="t" style="left:532.5px;width:60px;text-align:center;top:375.4px;font-size:16px;line-height:20px;color:#c0c0c0;">18</div>
<div class="t" style="left:573.0px;width:60px;text-align:center;top:375.4px;font-size:16px;line-height:20px;color:#c0c0c0;">19</div>
<div class="t" style="left:613.5px;width:60px;text-align:center;top:375.4px;font-size:16px;line-height:20px;color:#c0c0c0;">20</div>
<div class="t" style="left:654.0px;width:60px;text-align:center;top:375.4px;font-size:16px;line-height:20px;color:#c0c0c0;">21</div>
<div class="t" style="left:694.5px;width:60px;text-align:center;top:375.4px;font-size:16px;line-height:20px;color:#c0c0c0;">22</div>
<div class="t" style="left:451.5px;width:60px;text-align:center;top:415.9px;font-size:16px;line-height:20px;color:#c0c0c0;">23</div>
<div class="t" style="left:492.0px;width:60px;text-align:center;top:415.9px;font-size:16px;line-height:20px;color:#c0c0c0;">24</div>
<div class="t" style="left:532.5px;width:60px;text-align:center;top:415.9px;font-size:16px;line-height:20px;color:#c0c0c0;">25</div>
<div class="t" style="left:573.0px;width:60px;text-align:center;top:415.9px;font-size:16px;line-height:20px;color:#c0c0c0;">26</div>
<div class="t" style="left:613.5px;width:60px;text-align:center;top:415.9px;font-size:16px;line-height:20px;color:#c0c0c0;">27</div>
<div class="t" style="left:654.0px;width:60px;text-align:center;top:415.9px;font-size:16px;line-height:20px;color:#c0c0c0;">28</div>
<div class="t" style="left:694.5px;width:60px;text-align:center;top:415.9px;font-size:16px;line-height:20px;color:#c0c0c0;">29</div>
<div class="t" style="left:451.5px;width:60px;text-align:center;top:456.4px;font-size:16px;line-height:20px;color:#c0c0c0;">30</div>
<div class="t" style="left:492.0px;width:60px;text-align:center;top:456.4px;font-size:16px;line-height:20px;color:#c0c0c0;">31</div>
<div class="t" style="left:532.5px;width:60px;text-align:center;top:456.4px;font-size:16px;line-height:20px;color:#c0c0c0;">1</div>
<div class="t" style="left:573.0px;width:60px;text-align:center;top:456.4px;font-size:16px;line-height:20px;color:#c0c0c0;">2</div>
<div class="t" style="left:613.5px;width:60px;text-align:center;top:456.4px;font-size:16px;line-height:20px;color:#c0c0c0;">3</div>
<div class="t" style="left:654.0px;width:60px;text-align:center;top:456.4px;font-size:16px;line-height:20px;color:#c0c0c0;">4</div>
<div class="t" style="left:694.5px;width:60px;text-align:center;top:456.4px;font-size:16px;line-height:20px;color:#c0c0c0;">5</div>
</div>
<svg class="abs" style="left:0;top:0;pointer-events:none" width="1920" height="878" viewBox="0 0 1920 878"><defs><pattern id="wm" width="163" height="63.400" patternUnits="userSpaceOnUse" patternTransform="translate(-12,27)"><g fill="#c8c8c8" fill-opacity="0.05" font-family="Liberation Sans,sans-serif" font-size="13"><text transform="translate(20,32) rotate(-30)">17185</text><text transform="translate(101.500,63.500) rotate(-30)">17185</text><text transform="translate(101.500,0.500) rotate(-30)">17185</text></g></pattern></defs><rect y="74" width="1920" height="186" fill="url(#wm)" opacity="0.55"/><rect y="260" width="1920" height="618" fill="url(#wm)"/></svg>
</body>
</html>
